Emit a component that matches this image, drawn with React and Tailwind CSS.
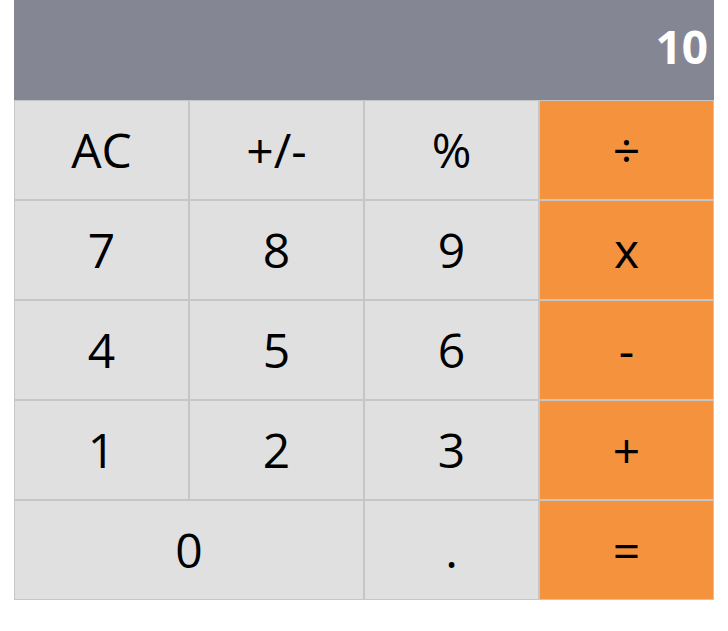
const rows = [
  [{ label: 'AC' }, { label: '+/-' }, { label: '%' }, { label: '÷', op: true }],
  [{ label: '7' }, { label: '8' }, { label: '9' }, { label: 'x', op: true }],
  [{ label: '4' }, { label: '5' }, { label: '6' }, { label: '-', op: true }],
  [{ label: '1' }, { label: '2' }, { label: '3' }, { label: '+', op: true }],
  [{ label: '0', wide: true }, { label: '.' }, { label: '=', op: true }],
]

function Key({ label, op, wide }) {
  return (
    <button
      className={
        'h-[100px] border border-[#c6c6c6] flex items-center justify-center text-[48px] leading-none text-black ' +
        (op ? 'bg-[#f5923e] ' : 'bg-[#e0e0e0] ') +
        (wide ? 'col-span-2' : '')
      }
    >
      {label}
    </button>
  )
}

export default function App() {
  return (
    <div className="w-[700px] mx-auto font-['Open_Sans',sans-serif]">
      <div className="h-[100px] bg-[#858694] flex items-center justify-end pr-[6px] pb-[9px] text-white font-bold text-[46px] leading-none">
        10
      </div>
      <div className="grid grid-cols-4">
        {rows.flat().map((k, i) => (
          <Key key={i} {...k} />
        ))}
      </div>
    </div>
  )
}
